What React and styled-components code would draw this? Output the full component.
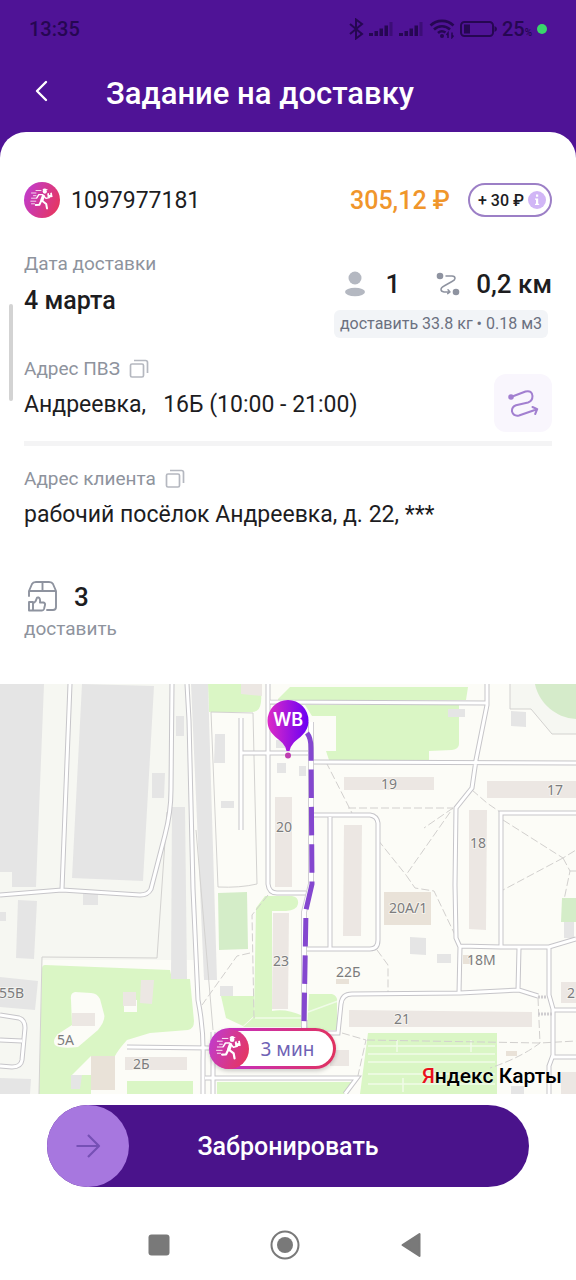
import React from "react";
import styled, { createGlobalStyle } from "styled-components";

const GlobalStyle = createGlobalStyle`
  * { box-sizing: border-box; }
  body { margin: 0; background: #fff; font-family: Roboto, "Liberation Sans", sans-serif; color: #1d1d1f; }
  button { font: inherit; color: inherit; border: 0; padding: 0; background: none; cursor: pointer; }
  h1, p { margin: 0; font-weight: inherit; }
  svg { display: block; flex: none; }
`;

const Screen = styled.div`
  background: #4f1396;
`;

const StatusBar = styled.div`
  display: flex;
  align-items: center;
  justify-content: space-between;
  height: 58px;
  padding: 0 29px;
  font-size: 20px;
  font-weight: 500;
  color: #260752;
`;

const StatusIcons = styled.div`
  display: flex;
  align-items: center;
  gap: 5px;
`;

const Battery = styled.span`
  display: flex;
  align-items: baseline;
  font-size: 20px;
  small { font-size: 10px; }
`;

const TitleBar = styled.header`
  display: flex;
  align-items: center;
  height: 74px;
  padding: 0 24px 4px 27px;
  gap: 51px;
  color: #fff;
`;

const BackButton = styled.button`
  display: grid;
  place-items: center;
  width: 28px;
  height: 44px;
  padding-bottom: 4px;
`;

const Title = styled.h1`
  padding-top: 2px;
  font-size: 31px;
  line-height: 40px;
  font-weight: 500;
`;

const Sheet = styled.main`
  position: relative;
  background: #fff;
  border-radius: 26px 26px 0 0;
  padding-top: 50px;
`;

const ScrollThumb = styled.div`
  position: absolute;
  left: 9px;
  top: 172px;
  width: 4px;
  height: 97px;
  border-radius: 2px;
  background: #d3d3d3;
`;

const Details = styled.div`
  padding: 0 24px;
`;

const Row = styled.div`
  display: flex;
  align-items: ${(p) => p.$align || "center"};
  justify-content: ${(p) => p.$justify || "flex-start"};
  gap: ${(p) => p.$gap || 0}px;
`;

const OrderNumber = styled.p`
  flex: 1;
  padding-top: 2px;
  font-size: 23px;
  line-height: 34px;
`;

const Price = styled.p`
  padding-top: 2px;
  font-size: 25px;
  line-height: 34px;
  font-weight: 500;
  color: #f0962b;
`;

const BonusButton = styled.button`
  display: flex;
  align-items: center;
  justify-content: space-between;
  width: 84px;
  height: 34px;
  padding: 0 4px 0 8px;
  border: 2px solid #9c7fc6;
  border-radius: 17px;
  background: #fff;
  font-size: 16px;
  font-weight: 500;
`;

const DateRow = styled(Row)`
  margin-top: 34px;
`;

const Label = styled.p`
  font-size: 19px;
  line-height: 24px;
  color: #8e939d;
`;

const Value = styled.p`
  font-size: ${(p) => (p.$strong ? 25 : 23)}px;
  line-height: 32px;
  font-weight: ${(p) => (p.$strong ? 500 : 400)};
  white-space: pre-wrap;
`;

const DateBlock = styled.div`
  display: grid;
  gap: 9px;
`;

const Summary = styled.div`
  display: flex;
  flex-direction: column;
  align-items: flex-end;
  gap: 10px;
  padding-top: 16px;
`;

const Load = styled.p`
  margin-right: 4px;
  padding: 0 6px;
  border-radius: 6px;
  background: #f2f4f7;
  color: #6b7080;
  font-size: 16px;
  line-height: 28px;
`;

const Stat = styled.span`
  display: flex;
  align-items: center;
  gap: ${(p) => p.$gap}px;
  font-size: 26px;
  line-height: 32px;
  font-weight: 500;
`;

const AddressRow = styled(Row)`
  margin-top: 19px;
  padding-bottom: 9px;
  border-bottom: 5px solid #f4f4f5;
`;

const AddressText = styled.div`
  flex: 1;
  display: grid;
  gap: 8px;
  padding-bottom: 11px;
`;

const RouteButton = styled.button`
  display: grid;
  place-items: center;
  width: 58px;
  height: 58px;
  border-radius: 12px;
  background: #f9f6fd;
`;

const ClientAddress = styled.div`
  display: grid;
  gap: 8px;
  padding-top: 21px;
`;

const Parcels = styled.div`
  display: grid;
  gap: 2px;
  padding: 48px 0 43px;
`;

const MapArea = styled.section`
  position: relative;
  overflow: hidden;
`;

const MapDrawing = styled.svg`
  width: 100%;
  height: auto;
`;

const Pin = styled.div`
  position: absolute;
  left: 50%;
  top: 4%;
  transform: translateX(-50%);
`;

const Eta = styled.div`
  position: absolute;
  left: 36.2%;
  top: 84%;
  display: flex;
  align-items: center;
  width: 127px;
  height: 41px;
  gap: 12px;
  padding-left: 2px;
  border: 3px solid transparent;
  border-left-width: 0;
  border-radius: 21px;
  background: linear-gradient(#fff, #fff) padding-box, linear-gradient(90deg, #c12fd0, #e0325f) border-box;
  box-shadow: 0 2px 4px rgba(0, 0, 0, 0.2);
  font: 19px/24px "Noto Sans", sans-serif;
  color: #6f62b5;
`;

const EtaIcon = styled.span`
  margin: -3px 0 -3px -2px;
`;

const Attribution = styled.a`
  position: absolute;
  right: 14px;
  bottom: 4px;
  font-size: 21px;
  line-height: 28px;
  font-weight: 500;
  color: #000;
  text-decoration: none;
  text-shadow: 0 0 2px #fff;
  span { color: #e8111c; }
`;

const Footer = styled.footer`
  padding: 11px 47px 0;
  background: #fff;
`;

const BookButton = styled.button`
  position: relative;
  display: grid;
  place-items: center;
  width: 100%;
  height: 82px;
  border-radius: 41px;
  background: #4a138b;
  color: #fff;
  font-size: 25px;
  font-weight: 500;
`;

const Knob = styled.span`
  position: absolute;
  left: 0;
  top: 0;
  display: grid;
  place-items: center;
  width: 82px;
  height: 82px;
  border-radius: 50%;
  background: #a777df;
`;

const SystemNav = styled.nav`
  display: flex;
  justify-content: center;
  align-items: center;
  gap: 94px;
  height: 93px;
  padding: 23px 6px 0 0;
  background: #fff;
`;

const NavButton = styled.button`
  display: grid;
  place-items: center;
  width: 32px;
  height: 32px;
`;

function Courier({ size, id }) {
  return (
    <svg width={size} height={size} viewBox="0 0 36 36" aria-hidden="true">
      <defs>
        <linearGradient id={id} x1="0" y1="0.3" x2="1" y2="0.7">
          <stop offset="0" stopColor="#c13bcb" />
          <stop offset="1" stopColor="#e6365f" />
        </linearGradient>
      </defs>
      <circle cx="18" cy="18" r="18" fill={`url(#${id})`} />
      <g fill="none" stroke="#fff" strokeLinecap="round" strokeLinejoin="round">
        <path strokeWidth=".8" d="M12 8.500h5M7.500 11h4.500M9.500 13.700h2.500M7.500 16.200h5M6.800 19.200h5M7.500 21.800h3" />
        <path strokeWidth="3.200" d="M19.300 14.200 17.800 18.400" />
        <path strokeWidth="1.400" d="M18.600 12.600 14.800 12.600 12.800 15.800M20 14.200 22 16.400 25.400 15.600" />
        <path strokeWidth="2" d="M18.400 19 22.200 22 23 26.400M17 19.400 15.400 22.800 11.800 23" />
      </g>
      <g fill="#fff">
        <circle cx="20.800" cy="9.600" r="2.100" />
        <path d="M18.600 7.600a2.600 2.400 0 0 1 4.200-.4l1.400.8-5.400.6zM23.200 11.400l1.700-.3.300 1.800 1.200-.2-.2-1.800 1.600-.3.800 4.400-4.900.8z" />
      </g>
    </svg>
  );
}

function CopyIcon() {
  return (
    <svg width="20" height="20" viewBox="0 0 20 20" fill="none" stroke="#b5b8c0" strokeWidth="1.700" aria-hidden="true">
      <rect x="1.500" y="5" width="13" height="13" rx="1.500" />
      <path d="M5 1.500h11.500a2 2 0 0 1 2 2V14" />
    </svg>
  );
}

function Signal() {
  return (
    <svg width="25" height="16" viewBox="0 0 25 16" fill="#260752">
      <path d="M0 12h4v3H0zM5.500 10h3.500v5H5.500zM10.500 7.500h3.500V15h-3.500zM15.500 4.500H19V15h-3.500z" />
      <path opacity=".45" d="M20.500 1H23.500v14h-3z" />
    </svg>
  );
}

const grey = [
  "0,684 44,684 36,887 12,887 12,872 0,872", "82,684 154,686 143,881 72,878", "152,773 165,773 164,798 152,798",
  "176,716 184,716 184,736 176,736", "172,807 185,807 187,979 171,979", "191,684 208,684 217,980 204,980",
  "83,894 98,894 98,905 83,905", "12,884 36,884 36,887 12,887", "18,900 37,901 34,959 16,958",
  "0,912 6,912 6,921 0,921", "0,977 38,981 35,1010 0,1007", "0,1078 31,1079 30,1094 0,1094",
  "215,734 225,734 225,763 214,763", "221,801 234,801 234,808 221,808", "277,763 286,763 286,773 277,773",
  "299,766 306,766 306,776 299,776", "276,740 285,740 285,748 276,748", "448,709 465,709 465,717 448,717",
  "511,711 526,712 526,727 511,726", "410,937 426,938 426,955 410,954", "437,954 451,954 451,963 437,963",
  "564,922 574,922 574,938 564,938", "220,986 233,986 233,996 220,996", "71,1075 82,1075 80,1089 71,1089",
  "511,1086 524,1086 524,1094 511,1094",
];

const green = [
  "M208 684H262L261 702Q260 712 252 712H209Z",
  "M278 699L290 687H468L466 700H278Z",
  "M305 705H459V744Q459 749 452 750L429 751V760H329L326 751H336V716H312Z",
  "M45 965L170 970L172 979H190L194 1021Q194 1029 188 1030L150 1033L127 1040Q118 1050 115 1056H91L72 1075H91V1094H39L42 969Q42 965 45 965ZM75 992Q70 993 71 1000L72 1025L58 1034Q52 1040 55 1045Q60 1049 78 1047L98 1030Q106 1020 104 1014L100 999Q97 993 91 993Z",
  "M127 1081H193V1094H127Z",
  "M256 908L265 896H292Q299 897 298 904Q297 910 286 911H272V1011Q286 1008 303 1016V1027H243L254 1017Z",
  "M221 996H254V1016L243 1026L226 1018Z",
  "M309 994H332Q338 996 337 1002V1030H307Z",
  "M217 1082H352L344 1094H217Z",
  "M368 1033H497V1094H360Z",
];

const beige = [
  "275,797 292,797 292,887 275,887", "344,777 434,777 434,790 344,790", "344,825 362,825 361,936 343,936",
  "487,781 576,781 576,798 487,798", "469,810 487,810 486,930 469,929", "273,913 289,913 288,1009 272,1009",
  "349,1010 532,1012 532,1027 349,1027", "561,982 576,982 576,1003 561,1003", "72,1013 95,1013 95,1026 72,1026",
  "123,992 136,992 136,1006 123,1006", "141,980 154,980 152,1004 140,1003", "125,1057 187,1057 187,1070 125,1070",
  "241,684 262,684 262,696 241,694", "330,1050 349,1050 349,1066 330,1066", "561,1072 576,1072 576,1094 561,1094",
];

const tan = [
  "384,892 431,892 431,925 384,925", "463,955 473,955 473,964 463,964", "336,979 349,979 349,984 336,984",
  "506,1051 517,1051 517,1056 506,1056", "91,1056 115,1056 115,1090 91,1090",
];

const roads = [
  "M70 684L62 889", "M0 895L62 890L140 895Q148 895 151 889L165 835Q171 812 171 790L172 684",
  "M187 684L189 720L193 889L198 1000Q204 1030 203 1060V1094",
  "M0 1015L19 1018Q25 1020 25 1028L22 1060Q21 1067 12 1067L0 1066M0 1040L22 1041",
  "M127 1047L210 1048", "M268 684V884Q269 893 277 893H306", "M270 702L488 703", "M242 753H308",
  "M241 718V830", "M312 762L576 763", "M313 815H370Q377 816 378 823V940Q378 949 370 949H306", "M330 817V948",
  "M487 684V705L476 760L472 788L456 808L455 885L456 938L460 947L459 993", "M501 947V813H576",
  "M460 946L501 947H549L576 939", "M519 948L518 990", "M315 1033H338L341 1004Q342 994 352 994L460 993L519 990L538 996",
  "M549 948V995L553 1009V1055L549 1066V1094", "M553 1010H576", "M553 1057H576",
  "M205 1078H357L345 1094", "M213 1032V1094", "M305 1020V1034",
];

const paths = [
  "M326 762L353 815M348 808H453L406 875L415 888L434 891L456 937", "M453 808L424 828", "M378 840L406 875",
  "M472 790L487 803L500 812", "M503 820L563 858L576 850M563 858L503 890M563 858L570 871L564 900M570 871H576",
  "M268 895L252 915L254 1018M250 953L237 956L202 1005", "M377 950L388 965V993", "M342 1033L366 1040L357 1080",
  "M538 998L540 1043Q520 1058 490 1068", "M367 1040L540 1043L576 1041",
];

const labels = [
  [276, 832, "20"], [381, 789, "19"], [547, 795, "17"], [470, 848, "18"], [389, 913, "20А/1"], [273, 966, "23"],
  [336, 977, "22Б"], [467, 965, "18М"], [394, 1024, "21"], [-1, 998, "55В"], [57, 1045, "5А"], [133, 1069, "2Б"],
  [567, 998, "2"],
];

function MapCanvas() {
  const road = roads.join("");
  return (
    <MapDrawing viewBox="0 684 576 410" role="img" aria-label="Карта маршрута">
      <rect y="684" width="576" height="410" fill="#fcfcf7" />
      <path fill="#f6f7f2" d="M0 684H190L198 960H42V1094H0ZM510 684V709H531L552 734H576V684Z" />
      <circle cx="578" cy="675" r="44" fill="#d5ebca" />
      <g fill="#daf6c5" fillRule="evenodd">{green.map((d) => <path key={d} d={d} />)}</g>
      <path fill="#d4edc8" d="M218 893L247 892L248 949L219 950ZM562 898H576V922H561Z" />
      <path fill="#fcfcf7" d="M124 1000H137V1012H124Z" />
      <g fill="#e5e5e5">{grey.map((p) => <polygon key={p} points={p} />)}</g>
      <g fill="#ece7e3">{beige.map((p) => <polygon key={p} points={p} />)}</g>
      <g fill="#e9e2d8">{tan.map((p) => <polygon key={p} points={p} />)}</g>
      <g fill="none">
        <path stroke="#d3d2d0" d="M211 712L253 713L257 884Q240 888 218 887L211 712M167 812L157 958L42 957L39 1094M510 684V709H531L552 734H576M196 830L213 1030" />
        <path stroke="#fff" opacity=".6" strokeWidth="1.500" d="M368 1046H495M368 1054H495M368 1062H495M368 1074H495M368 1084H495M397 1040V1052M471 1040V1052M403 1078V1092M308 1012L338 1001M255 1018H303" />
        <path stroke="#d2d0ce" strokeDasharray="8 3" d={paths.join("")} />
        <path stroke="#c6c5c9" strokeWidth="5" d={road} />
        <path stroke="#fff" strokeWidth="3" d={road} />
        <path stroke="#d0ced3" strokeWidth="6" d="M311 722V884L304 912V1030" />
        <path stroke="#fff" strokeWidth="4" d="M311 722V884L304 912V1030" />
        <path stroke="#cfcdd0" strokeWidth="3" strokeDasharray="2 1" d="M538 997H547M538 1014H552" />
        <path stroke="#8447cf" strokeWidth="5" strokeDasharray="28.500 8.800" d="M307 733Q311 738 311 748L312 884L306 910L304 1022" />
      </g>
      <g fill="#7c7c7e" stroke="#fcfcf7" strokeWidth="2" paintOrder="stroke" strokeOpacity=".6" fontFamily="Noto Sans, sans-serif" fontSize="14">
        {labels.map(([x, y, t]) => <text key={t} x={x} y={y}>{t}</text>)}
      </g>
    </MapDrawing>
  );
}

export default function App() {
  return (
    <Screen>
      <GlobalStyle />
      <StatusBar>
        <span>13:35</span>
        <StatusIcons>
          <svg width="16" height="22" viewBox="0 0 16 22" fill="none" stroke="#260752" strokeWidth="2">
            <path d="M2 6l12 10-6 4.500V1.500L14 6 2 16" />
          </svg>
          <Signal />
          <Signal />
          <svg width="26" height="20" viewBox="0 0 26 20" fill="none" stroke="#260752" strokeWidth="2.600">
            <path d="M1.500 6.500a16.500 16.500 0 0 1 23 0M5 10.500a11.500 11.500 0 0 1 16 0M9 14a6 6 0 0 1 7.500-.5" />
            <circle cx="13" cy="17" r="2" fill="#260752" stroke="none" />
            <path strokeWidth="1.500" d="M19 19v-5l-1.500 2M23 13.500v5l1.500-2" />
          </svg>
          <svg width="37" height="18" viewBox="0 0 37 18">
            <rect x="1" y="2" width="32" height="14" rx="3.500" fill="none" stroke="#260752" strokeWidth="2" />
            <path fill="#260752" d="M4 4.500h6v9H4zM34.500 6q2.500 1 2.500 3t-2.500 3z" />
          </svg>
          <Battery>25<small>%</small></Battery>
          <svg width="10" height="10" viewBox="0 0 10 10"><circle cx="5" cy="5" r="5" fill="#39d66b" /></svg>
        </StatusIcons>
      </StatusBar>
      <TitleBar>
        <BackButton aria-label="Назад">
          <svg width="14" height="22" viewBox="0 0 14 22" fill="none" stroke="#fff" strokeWidth="2.400" strokeLinecap="round" strokeLinejoin="round">
            <path d="M12 2 3 11l9 9" />
          </svg>
        </BackButton>
        <Title>Задание на доставку</Title>
      </TitleBar>

      <Sheet>
        <ScrollThumb />
        <Details>
          <Row $gap={11}>
            <Courier size={36} id="courier-order" />
            <OrderNumber>1097977181</OrderNumber>
            <Row $gap={18}>
              <Price>305,12 ₽</Price>
              <BonusButton>
                + 30 ₽
                <svg width="18" height="18" viewBox="0 0 18 18" aria-hidden="true">
                  <circle cx="9" cy="9" r="9" fill="#d1b6f6" />
                  <path fill="#fff" d="M8 3.500h2.200v2.200H8zM7 7.500h3.200v5.300h1V14H7v-1.200h1V8.700H7z" />
                </svg>
              </BonusButton>
            </Row>
          </Row>

          <DateRow $align="flex-start" $justify="space-between">
            <DateBlock>
              <Label>Дата доставки</Label>
              <Value $strong>4 марта</Value>
            </DateBlock>
            <Summary>
              <Row $gap={36}>
                <Stat $gap={20}>
                  <svg width="20" height="26" viewBox="0 0 20 26" fill="#b4b8c1" aria-hidden="true">
                    <circle cx="10" cy="7" r="6.500" />
                    <ellipse cx="10" cy="21" rx="10" ry="4.200" />
                  </svg>
                  1
                </Stat>
                <Stat $gap={16}>
                  <svg width="24" height="24" viewBox="0 0 24 24" fill="none" stroke="#8e93a0" strokeWidth="1.500" aria-hidden="true">
                    <circle cx="4" cy="4" r="3.300" fill="#8e93a0" stroke="none" />
                    <circle cx="20" cy="20" r="3.300" fill="#8e93a0" stroke="none" />
                    <path strokeLinecap="round" strokeLinejoin="round" d="M10 4h6q3 0 3 2.500Q19 8 16 9.500L8 14q-3 1.500-3 3.500 0 2 3 2.500h5M12 17.800l2 2.200-2.300 1.600" />
                  </svg>
                  0,2 км
                </Stat>
              </Row>
              <Load>доставить 33.8 кг • 0.18 м3</Load>
            </Summary>
          </DateRow>

          <AddressRow $align="flex-end">
            <AddressText>
              <Row $gap={9}><Label>Адрес ПВЗ</Label><CopyIcon /></Row>
              <Value>{"Андреевка,   16Б (10:00 - 21:00)"}</Value>
            </AddressText>
            <RouteButton aria-label="Построить маршрут">
              <svg width="32" height="28" viewBox="0 0 32 28" fill="none" stroke="#a27fd0" strokeWidth="2" strokeLinecap="round" strokeLinejoin="round">
                <circle cx="4" cy="8" r="2.800" fill="#a27fd0" stroke="none" />
                <path d="M4 8 18.500 2.500Q25 1 25.500 7q0 5-4.500 6.500L9 16.200Q4.500 18 5 22.500q1.500 5 7 4L30 20.300M25.500 18l4.700 2.200-2 4.800" />
              </svg>
            </RouteButton>
          </AddressRow>

          <ClientAddress>
            <Row $gap={9}><Label>Адрес клиента</Label><CopyIcon /></Row>
            <Value>рабочий посёлок Андреевка, д. 22, ***</Value>
          </ClientAddress>

          <Parcels>
            <Row $gap={13}>
              <svg width="37" height="36" viewBox="0 0 37 36" fill="none" stroke="#8e939f" strokeWidth="1.900" strokeLinecap="round" strokeLinejoin="round" aria-hidden="true">
                <path d="M5 17V12l3-7q1-2 4-2h13q3 0 4 2l3 7v16q0 3-3 3h-6M5 12h27M18.500 3v9" />
                <path d="M5 23h4v8.500H5zM9 24.500q3-1.500 3.500-4.500.5-2 2-1.500 2 .7 1.500 5h3.500q2 .5 1.500 2.500l-1 4q-.5 1.500-2 1.500H9" />
              </svg>
              <Stat>3</Stat>
            </Row>
            <Label>доставить</Label>
          </Parcels>
        </Details>

        <MapArea>
          <MapCanvas />
          <Pin>
            <svg width="42" height="60" viewBox="0 0 42 60" aria-label="Пункт выдачи">
              <defs>
                <linearGradient id="pin">
                  <stop offset="0" stopColor="#dd2bc6" />
                  <stop offset="1" stopColor="#6a00f4" />
                </linearGradient>
              </defs>
              <path fill="url(#pin)" d="M21 0a20.500 20.500 0 0 1 20.500 20.500c0 13-10 17-15 22.500Q23 47 22.500 51h-3Q19 47 15.500 43C10.500 37.500.5 33.500.5 20.500A20.500 20.500 0 0 1 21 0Z" />
              <circle cx="21" cy="55.500" r="3" fill="#bf3fb0" />
              <text x="21" y="26" fill="#fff" textAnchor="middle" fontFamily="Inter, sans-serif" fontWeight="600" fontSize="18">WB</text>
            </svg>
          </Pin>
          <Eta>
            <EtaIcon><Courier size={40} id="courier-eta" /></EtaIcon>
            3 мин
          </Eta>
          <Attribution href="#maps"><span>Я</span>ндекс Карты</Attribution>
        </MapArea>

        <Footer>
          <BookButton>
            <Knob>
              <svg width="26" height="26" viewBox="0 0 26 26" fill="none" stroke="#7650b5" strokeWidth="2.200" strokeLinejoin="round">
                <path d="M1.500 13h22M13 2l11 11-11 11" />
              </svg>
            </Knob>
            Забронировать
          </BookButton>
        </Footer>
        <SystemNav>
          <NavButton aria-label="Недавние">
            <svg width="22" height="22" viewBox="0 0 22 22"><rect x=".5" y=".5" width="21" height="21" rx="3" fill="#797979" /></svg>
          </NavButton>
          <NavButton aria-label="Домой">
            <svg width="30" height="30" viewBox="0 0 30 30">
              <circle cx="15" cy="15" r="13.500" fill="none" stroke="#797979" strokeWidth="2" />
              <circle cx="15" cy="15" r="8" fill="#797979" />
            </svg>
          </NavButton>
          <NavButton aria-label="Назад в системе">
            <svg width="20" height="26" viewBox="0 0 20 26"><path d="M18.500 2v22L1.500 13z" fill="#797979" stroke="#797979" strokeWidth="2" strokeLinejoin="round" /></svg>
          </NavButton>
        </SystemNav>
      </Sheet>
    </Screen>
  );
}
